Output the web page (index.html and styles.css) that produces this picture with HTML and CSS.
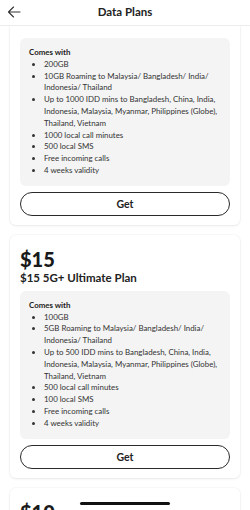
FILE: index.html
```html
<!DOCTYPE html>
<html>
<head>
<meta charset="utf-8">
<link rel="stylesheet" href="styles.css">
</head>
<body>
<header class="topbar">
  <svg class="back" width="14" height="12" viewBox="0 0 14 12"><path d="M13 6H1.5M6.5 1L1.5 6l5 5" fill="none" stroke="#333" stroke-width="1.1" stroke-linecap="round" stroke-linejoin="round"/></svg>
  <h1 class="title">Data Plans</h1>
</header>
<main class="list">
  <section class="card card-cut">
    <div class="perks">
      <div class="perks-head">Comes with</div>
      <ul>
        <li>200GB</li>
        <li>10GB Roaming to Malaysia/ Bangladesh/ India/ Indonesia/ Thailand</li>
        <li>Up to 1000 IDD mins to Bangladesh, China, India, Indonesia, Malaysia, Myanmar, Philippines (Globe), Thailand, Vietnam</li>
        <li>1000 local call minutes</li>
        <li>500 local SMS</li>
        <li>Free incoming calls</li>
        <li>4 weeks validity</li>
      </ul>
    </div>
    <button class="get">Get</button>
  </section>
  <section class="card">
    <div class="price">$15</div>
    <div class="plan">$15 5G+ Ultimate Plan</div>
    <div class="perks">
      <div class="perks-head">Comes with</div>
      <ul>
        <li>100GB</li>
        <li>5GB Roaming to Malaysia/ Bangladesh/ India/ Indonesia/ Thailand</li>
        <li>Up to 500 IDD mins to Bangladesh, China, India, Indonesia, Malaysia, Myanmar, Philippines (Globe), Thailand, Vietnam</li>
        <li>500 local call minutes</li>
        <li>100 local SMS</li>
        <li>Free incoming calls</li>
        <li>4 weeks validity</li>
      </ul>
    </div>
    <button class="get">Get</button>
  </section>
  <section class="card">
    <div class="price">$10</div>
  </section>
</main>
<div class="home-bar"></div>
</body>
</html>
```
FILE: styles.css
```css
* { box-sizing: border-box; }
html, body { margin: 0; padding: 0; }
body {
  width: 250px;
  height: 510px;
  overflow: hidden;
  background: #fff;
  font-family: Lato, "Open Sans", sans-serif;
  color: #2a2a2a;
  position: relative;
}
.topbar {
  height: 26px;
  border-bottom: 1px solid #ececec;
  display: flex;
  align-items: center;
  justify-content: center;
  position: relative;
  background: #fff;
}
.back {
  position: absolute;
  left: 7px;
  top: 6px;
}
.title {
  margin: 0;
  font-size: 11.5px;
  font-weight: 700;
  color: #222;
  line-height: 14px;
  margin-top: -2px;
}
.list {
  padding: 0 10px;
  display: flex;
  flex-direction: column;
  gap: 10px;
}
.card {
  background: #fff;
  border-radius: 6px;
  box-shadow: 0 1px 3px rgba(0,0,0,0.07), 0 0 0 1px rgba(0,0,0,0.025);
  padding: 12px 10px 9px;
  display: flex;
  flex-direction: column;
}
.card-cut {
  border-top-left-radius: 0;
  border-top-right-radius: 0;
  padding-top: 12px;
}
.price {
  font-size: 20px;
  font-weight: 900;
  line-height: 24px;
  color: #1a1a1a;
}
.plan {
  font-size: 11.5px;
  font-weight: 700;
  line-height: 14px;
  color: #222;
  margin-bottom: 6px;
}
.perks {
  background: #f4f4f4;
  border-radius: 6px;
  padding: 9px 8px 9px 9px;
  font-size: 7.9px;
  line-height: 11.8px;
  color: #333;
}
.perks-head {
  font-weight: 700;
  color: #222;
}
.perks ul {
  margin: 0;
  padding-left: 15px;
}
.get {
  margin-top: 6px;
  height: 24px;
  border: 1.4px solid #2a2a2a;
  border-radius: 12px;
  background: #fff;
  font-family: Lato, sans-serif;
  font-weight: 700;
  font-size: 10.5px;
  color: #222;
  padding: 0;
}
.home-bar {
  position: absolute;
  left: 80px;
  top: 502px;
  width: 90px;
  height: 3px;
  border-radius: 2px;
  background: #111;
}
```
